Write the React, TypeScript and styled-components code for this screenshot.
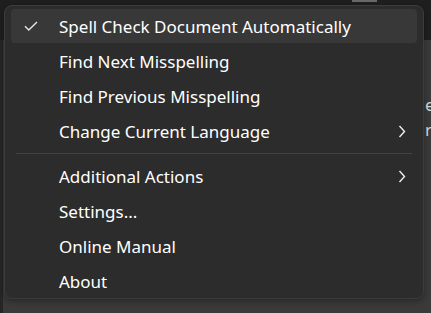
import styled, { createGlobalStyle } from 'styled-components';

const GlobalStyle = createGlobalStyle`
  html, body {
    margin: 0;
    padding: 0;
    background: #3a3a3a;
    font-family: 'Noto Sans', 'Open Sans', sans-serif;
  }
`;

const Screen = styled.div`
  position: relative;
  width: 431px;
  height: 313px;
  overflow: hidden;
  display: grid;
  grid-template-rows: 40px 1fr;
  background: #3a3a3a;
`;

const TopBar = styled.div`
  background: #1f1f1f;
  display: flex;
  padding-left: 352px;
`;

const TabMark = styled.div`
  width: 25px;
  height: 2px;
  background: #6a6a6a;
`;

const Editor = styled.div`
  display: flex;
  justify-content: flex-end;
  border-left: 3px solid #262626;
`;

const PeekText = styled.div`
  width: 6px;
  padding-top: 52px;
  color: #d8d8d8;
  font-size: 17px;
  line-height: 25px;
  overflow: hidden;
  white-space: nowrap;
`;

const Menu = styled.div`
  position: absolute;
  left: 4px;
  top: 5px;
  width: 420px;
  box-sizing: border-box;
  padding: 3px 6px 0;
  background: #2c2c2c;
  border: 1px solid #3c3c3c;
  border-radius: 8px;
  box-shadow: 0 2px 6px rgba(0, 0, 0, 0.35);
  display: flex;
  flex-direction: column;
`;

const Item = styled.div<{ $active?: boolean }>`
  flex-shrink: 0;
  height: 34px;
  margin-bottom: 1px;
  display: flex;
  align-items: center;
  border-radius: 4px;
  background: ${({ $active }) => ($active ? '#383838' : 'transparent')};
  color: #ffffff;
  font-size: 17px;

  &:last-child {
    margin-bottom: 0;
  }
`;

const IconSlot = styled.div`
  width: 48px;
  display: flex;
  justify-content: center;
  padding-right: 8px;
  box-sizing: border-box;
`;

const Label = styled.span`
  flex: 1;
`;

const Arrow = styled.div`
  width: 31px;
  display: flex;
  justify-content: center;
`;

const Separator = styled.div`
  flex-shrink: 0;
  height: 1px;
  margin: 4px 5px 5px;
  background: #424242;
`;

const Check = () => (
  <svg width="14" height="10" viewBox="0 0 14 10">
    <path d="M1 5.2 L4.8 9 L13 1" fill="none" stroke="#e6e6e6" strokeWidth="1.4" />
  </svg>
);

const Chevron = () => (
  <svg width="8" height="13" viewBox="0 0 8 13">
    <path d="M1.5 1 L6.5 6.5 L1.5 12" fill="none" stroke="#f0f0f0" strokeWidth="1.4" />
  </svg>
);

const topItems = [
  { label: 'Spell Check Document Automatically', checked: true },
  { label: 'Find Next Misspelling' },
  { label: 'Find Previous Misspelling' },
  { label: 'Change Current Language', submenu: true },
];

const bottomItems = [
  { label: 'Additional Actions', submenu: true },
  { label: 'Settings...' },
  { label: 'Online Manual' },
  { label: 'About' },
];

type Entry = { label: string; checked?: boolean; submenu?: boolean };

function Row({ entry }: { entry: Entry }) {
  return (
    <Item $active={entry.checked}>
      <IconSlot>{entry.checked && <Check />}</IconSlot>
      <Label>{entry.label}</Label>
      <Arrow>{entry.submenu && <Chevron />}</Arrow>
    </Item>
  );
}

export default function App() {
  return (
    <>
      <GlobalStyle />
      <Screen>
        <TopBar>
          <TabMark />
        </TopBar>
        <Editor>
          <PeekText>
            e<br />r
          </PeekText>
        </Editor>
        <Menu>
          {topItems.map((e) => (
            <Row key={e.label} entry={e} />
          ))}
          <Separator />
          {bottomItems.map((e) => (
            <Row key={e.label} entry={e} />
          ))}
        </Menu>
      </Screen>
    </>
  );
}
